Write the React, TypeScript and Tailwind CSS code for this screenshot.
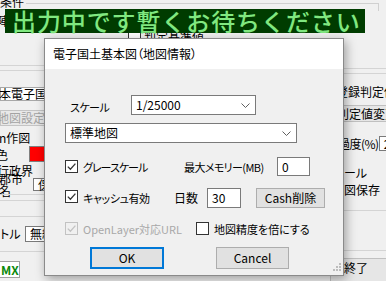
import clsx from "clsx";

function Check({ checked, disabled }: { checked?: boolean; disabled?: boolean }) {
  const c = disabled ? "#c2c2c2" : "#333333";
  return (
    <span
      className={clsx(
        "w-[13px] h-[13px] border flex items-center justify-center shrink-0",
        disabled ? "border-[#c2c2c2]" : "border-[#333] bg-white"
      )}
    >
      {checked && (
        <svg width="11" height="11" viewBox="0 0 11 11">
          <path d="M1.8 5.6l2.6 2.6L9.4 2.6" fill="none" stroke={c} strokeWidth="1.3" />
        </svg>
      )}
    </span>
  );
}

function Select({ value, className }: { value: string; className?: string }) {
  return (
    <div
      className={clsx(
        "h-[20px] border border-[#7a7a7a] bg-white flex items-center justify-between pl-[4px] pr-[5px]",
        className
      )}
    >
      <span className="leading-[12px]">{value}</span>
      <svg width="9" height="5" viewBox="0 0 9 5">
        <path d="M0.5 0.5L4.5 4.5L8.5 0.5" fill="none" stroke="#606060" strokeWidth="1" />
      </svg>
    </div>
  );
}

function Input({ value, className }: { value: string; className?: string }) {
  return (
    <div className={clsx("border border-[#7a7a7a] bg-white flex items-center pl-[4px]", className)}>
      <span className="leading-[12px] whitespace-nowrap">{value}</span>
    </div>
  );
}

function Line({ className }: { className?: string }) {
  return <div className={clsx("h-px bg-[#d4d4d4] w-full", className)} />;
}

export default function App() {
  return (
    <div className="relative w-[386px] h-[281px] overflow-hidden bg-[#f0f0f0] text-[12px] text-black font-['Noto_Sans_CJK_JP',sans-serif] [font-feature-settings:'palt']">
      {/* top strip */}
      <div className="h-[38px] flex flex-col">
        <div className="flex items-start h-[10px]">
          <span className="-mt-[4px] leading-[12px]">条件</span>
          <div className="mt-[3px] ml-[2px] w-[353px] h-[8px] border-t border-r border-[#d0d0d0]" />
        </div>
        <div className="flex-1 flex">
          <span className="-ml-[3px] mt-[5px] leading-[12px]">陣</span>
          <div className="ml-[119px] mt-[22px] flex items-start gap-[3px]">
            <Check />
            <span className="leading-[12px] -mt-[1px]">判定基準値</span>
          </div>
        </div>
      </div>

      {/* background columns */}
      <div className="flex">
        <div className="w-[200px] flex flex-col">
          <Line className="mt-[27px]" />
          <Line className="mt-[4px]" />
          <div className="mt-[16px] h-[14px] w-[120px] border border-[#a8a8a8] bg-white flex items-center">
            <span className="-ml-[2px] leading-[12px] whitespace-nowrap">本電子国土基本図</span>
          </div>
          <div className="mt-[9px] h-[16px] w-[120px] border border-[#c4c4c4] bg-[#e8e8e8] flex items-center">
            <span className="-ml-[4px] leading-[12px] text-[#a3a3a3]">地図設定</span>
          </div>
          <span className="mt-[6px] leading-[12px] -ml-[1px]">n作図</span>
          <div className="mt-[2px] h-[16px] flex items-center">
            <span className="-ml-[4px] w-[33px] leading-[12px] pt-[2px]">色</span>
            <div className="w-[40px] h-[16px] bg-[#ff0000] border border-[#808080]" />
          </div>
          <span className="mt-[3px] leading-[12px] -ml-[3px]">行政界</span>
          <div className="mt-[1px] h-[13px] flex items-center">
            <span className="-ml-[1px] w-[34px] leading-[12px]">郡市名</span>
            <Input value="保谷" className="w-[40px] h-[13px] pl-[1px]" />
          </div>
          <Line className="mt-[3px]" />
          <Line className="mt-[5px]" />
          <Line className="mt-[15px]" />
          <div className="mt-[9px] h-[16px] flex items-center">
            <span className="w-[25px] leading-[12px]">トル</span>
            <Input value="無線" className="w-[40px] h-[16px] pl-[1px]" />
          </div>
          <Line className="mt-[9px]" />
          <div className="mt-[9px] h-[17px] w-[22px] -ml-[2px] border border-[#a0a0a0] bg-white flex items-center pl-[2px]">
            <span className="leading-[12px] font-bold text-[#0a8a0a]">MX</span>
          </div>
        </div>

        <div className="flex-1" />

        <div className="w-[56px] flex flex-col">
          <Line className="mt-[30px]" />
          <Line className="mt-[4px]" />
          <span className="mt-[12px] ml-[6px] leading-[12px] whitespace-nowrap">登録判定値</span>
          <div className="mt-[7px] h-[17px] w-[70px] border border-[#c0c0c0] bg-[#e6e6e6] flex items-center">
            <span className="ml-[6px] leading-[12px] whitespace-nowrap">判定値変更</span>
          </div>
          <div className="mt-[14px] h-[15px] flex items-center">
            <span className="ml-[8px] w-[45px] leading-[12px] whitespace-nowrap tracking-[-0.5px]">過度(%)</span>
            <Input value="2" className="w-[20px] h-[15px] pl-[1px]" />
          </div>
          <span className="mt-[16px] ml-[14px] leading-[12px]">ール</span>
          <span className="mt-[5px] ml-[14px] leading-[12px]">図保存</span>
          <Line className="mt-[14px]" />
          <Line className="mt-[39px]" />
          <div className="mt-[7px] h-[30px] w-[70px] border border-[#c0c0c0] bg-[#e6e6e6] flex items-start pt-[3px]">
            <span className="ml-[13px] leading-[12px]">終了</span>
          </div>
        </div>
      </div>

      {/* banner */}
      <div className="absolute left-[5px] top-[9px] w-[360px] h-[24px] bg-[#003c00] flex items-center pl-[7px]">
        <span className="text-[24px] leading-[24px] tracking-[0.9px] font-medium text-[#80e880] [font-feature-settings:normal] whitespace-nowrap">
          出力中です暫くお待ちください
        </span>
      </div>

      {/* dialog */}
      <div className="absolute left-[44px] top-[38px] w-[300px] h-[238px] border border-[#8a8a8a] bg-[#f0f0f0] flex flex-col shadow-[2px_3px_10px_rgba(0,0,0,0.35)]">
        <div className="h-[30px] bg-white flex items-center pl-[8px]">
          <span className="leading-[12px] whitespace-nowrap">電子国土基本図（地図情報）</span>
        </div>
        <div className="relative flex-1 flex flex-col">
          <div className="mt-[26px] h-[20px] flex items-center">
            <span className="ml-[25px] w-[61px] pt-[3px] leading-[12px] text-[11px] tracking-[-0.5px]">スケール</span>
            <Select value="1/25000" className="w-[125px]" />
          </div>
          <Select value="標準地図" className="mt-[8px] ml-[20px] w-[232px]" />

          <div className="mt-[14px] h-[19px] flex items-center">
            <span className="ml-[20px]">
              <Check checked />
            </span>
            <span className="ml-[5px] w-[101px] leading-[12px] text-[11px] tracking-[-1px] whitespace-nowrap">グレースケール</span>
            <span className="w-[93px] leading-[12px] text-[11px] tracking-[-0.6px] whitespace-nowrap">最大メモリー(MB)</span>
            <Input value="0" className="w-[33px] h-[19px]" />
          </div>

          <div className="mt-[12px] h-[20px] flex items-center">
            <span className="ml-[20px] -mt-[4px]">
              <Check checked />
            </span>
            <span className="ml-[5px] w-[91px] leading-[12px] text-[11px] tracking-[-0.4px] whitespace-nowrap">キャッシュ有効</span>
            <span className="w-[33px] leading-[12px]">日数</span>
            <Input value="30" className="w-[34px] h-[20px]" />
            <div className="ml-[15px] w-[69px] h-[20px] bg-[#e1e1e1] border border-[#adadad] flex items-center justify-center">
              <span className="leading-[12px] whitespace-nowrap">Cash削除</span>
            </div>
          </div>

          <div className="mt-[14px] h-[13px] flex items-center">
            <span className="ml-[20px]">
              <Check checked disabled />
            </span>
            <span className="ml-[5px] w-[113px] leading-[12px] text-[11px] text-[#a8a8a8] whitespace-nowrap">OpenLayer対応URL</span>
            <Check />
            <span className="ml-[5px] leading-[12px] text-[11px] whitespace-nowrap">地図精度を倍にする</span>
          </div>

          <div className="mt-[12px] h-[22px] flex">
            <div className="ml-[45px] w-[74px] h-[22px] bg-[#e1e1e1] border-2 border-[#0078d7] flex items-center justify-center">
              <span className="leading-[12px]">OK</span>
            </div>
            <div className="ml-[52px] w-[73px] h-[22px] bg-[#e1e1e1] border border-[#adadad] flex items-center justify-center">
              <span className="leading-[12px]">Cancel</span>
            </div>
          </div>

          <svg className="absolute right-[2px] bottom-[2px]" width="10" height="10" viewBox="0 0 10 10">
            <g fill="#bcbcbc">
              <rect x="8" y="0" width="2" height="2" />
              <rect x="5" y="3" width="2" height="2" />
              <rect x="8" y="3" width="2" height="2" />
              <rect x="2" y="6" width="2" height="2" />
              <rect x="5" y="6" width="2" height="2" />
              <rect x="8" y="6" width="2" height="2" />
            </g>
          </svg>
        </div>
      </div>
    </div>
  );
}
